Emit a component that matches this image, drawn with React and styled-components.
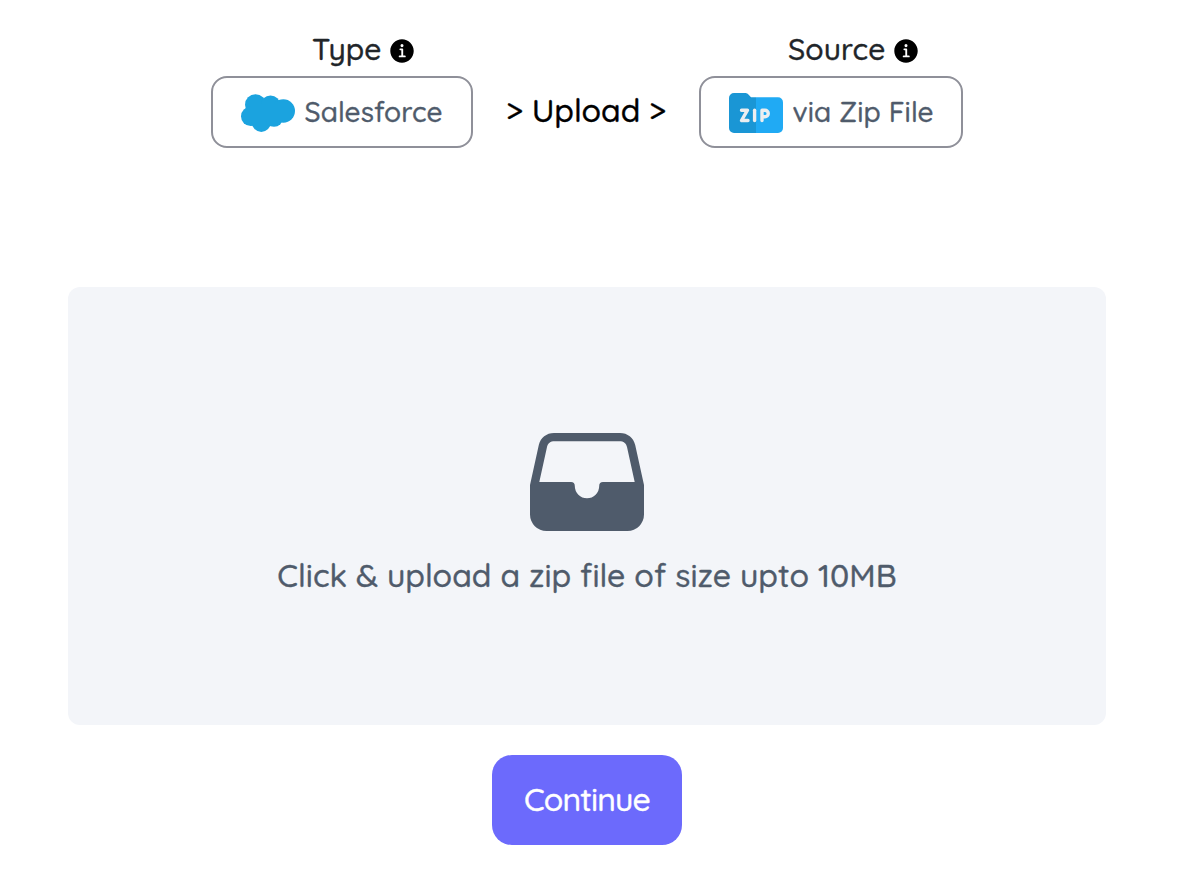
import styled, { createGlobalStyle } from "styled-components";
import { IoInformationCircle } from "react-icons/io5";

const App = () => {
  return (
    <>
      <GlobalStyle />
      <Container>
        <Header>
          <Option>
            <Label $indent="45px">
              Type <IoInformationCircle />
            </Label>
            <Select $width="262px">
              <SalesforceLogo />
              <Name>Salesforce</Name>
            </Select>
          </Option>
          <Step>&gt; Upload &gt;</Step>
          <Option>
            <Label $indent="47px">
              Source <IoInformationCircle />
            </Label>
            <Select $width="264px">
              <ZipLogo />
              <Name>via Zip File</Name>
            </Select>
          </Option>
        </Header>
        <DropZone>
          <InboxIcon />
          <Hint>Click &amp; upload a zip file of size upto 10MB</Hint>
        </DropZone>
        <Continue>Continue</Continue>
      </Container>
    </>
  );
};

const SalesforceLogo = () => (
  <svg width="54" height="38" viewBox="0 0 54 38">
    <g fill="#1ba3df">
      <circle cx="14.5" cy="10.7" r="10.5" />
      <circle cx="29.5" cy="11.3" r="9.8" />
      <circle cx="42.3" cy="17" r="11.7" />
      <circle cx="9.7" cy="22.3" r="9.7" />
      <circle cx="20.3" cy="28.3" r="9.6" />
      <circle cx="33" cy="23.8" r="9" />
      <path d="M10 10h32v16H10z" />
    </g>
  </svg>
);

const ZipLogo = () => (
  <svg width="54" height="40" viewBox="0 0 54 40">
    <path
      d="M5 0h11.500q2 0 3.200 1.700L22 4.300H27V40H5a5 5 0 0 1-5-5V5a5 5 0 0 1 5-5z"
      fill="#1a96d5"
    />
    <path d="M27 4.300h22a5 5 0 0 1 5 5V35a5 5 0 0 1-5 5H27z" fill="#20aaf4" />
    <g
      fill="none"
      stroke="#eceef0"
      strokeWidth="3.400"
      strokeLinecap="round"
      strokeLinejoin="round"
    >
      <path d="M12.500 17.200h6l-6 10.300h6.500" />
      <path d="M25.600 17.200v10.300" />
      <path d="M33 27.500V17.200h3a3 3 0 0 1 0 6.500h-3" />
    </g>
  </svg>
);

const InboxIcon = () => (
  <svg width="114" height="98" viewBox="0 0 114 98">
    <path
      fill="#4f5b6b"
      fillRule="evenodd"
      d="M24 0H90C97.500 0 103.500 4.800 105.200 12L114 52V81.500A16.500 16.500 0 0 1 97.500 98H16.500A16.500 16.500 0 0 1 0 81.500V52L8.800 12C10.500 4.800 16.500 0 24 0ZM24.500 8.300C20.500 8.300 17.800 10.300 17 14L9.300 49H41C43.500 49 44.800 50.600 44.800 53A12.200 12.200 0 0 0 69.200 53C69.200 50.600 70.500 49 73 49H104.700L97 14C96.200 10.300 93.500 8.300 89.500 8.300Z"
    />
  </svg>
);

const GlobalStyle = createGlobalStyle`
  body {
    margin: 0;
    background: #fff;
    font-family: Quicksand, Lato, sans-serif;
    font-weight: 500;
    -webkit-text-stroke: 0.35px;
  }
`;
const Container = styled.main`
  display: flex;
  flex-direction: column;
  align-items: center;
  height: 888px;
  padding: 30px 74px 0 68px;
  box-sizing: border-box;
`;
const Header = styled.header`
  display: flex;
  justify-content: center;
  align-items: flex-end;
  height: 118px;
  margin-bottom: 139px;
`;
const Option = styled.div`
  display: flex;
  flex-direction: column;
`;
const Label = styled.div`
  display: flex;
  align-items: center;
  justify-content: center;
  gap: 5.5px;
  height: 38px;
  margin-bottom: 8px;
  padding-left: ${(props) => props.$indent};
  color: #212529;
  font-size: 30px;
  letter-spacing: 0.1px;

  svg {
    width: 30px;
    height: 30px;
    margin-top: 4px;
    color: #000;
  }
`;
const Select = styled.button`
  display: flex;
  align-items: center;
  gap: 9.5px;
  width: ${(props) => props.$width};
  height: 72px;
  padding: 0 28px;
  box-sizing: border-box;
  border: 2px solid #8f9099;
  border-radius: 16px;
  background: #fff;
  font-family: inherit;
  font-weight: inherit;

  svg {
    flex-shrink: 0;
    margin-top: 2px;
  }
`;
const Name = styled.span`
  color: #4f5b6b;
  font-size: 28px;
  line-height: 34px;
  letter-spacing: 0.1px;
  white-space: nowrap;
`;
const Step = styled.div`
  width: 226px;
  height: 72px;
  color: #000;
  font-size: 32px;
  line-height: 69px;
  text-align: center;
  white-space: nowrap;
`;
const DropZone = styled.section`
  display: flex;
  flex-direction: column;
  align-items: center;
  width: 100%;
  height: 438px;
  padding-top: 146px;
  box-sizing: border-box;
  border-radius: 12px;
  background: #f3f5f9;
`;
const Hint = styled.p`
  margin: 24px 0 0;
  color: #4f5b6b;
  font-size: 32px;
  line-height: 40px;
  letter-spacing: 0.05px;
  white-space: nowrap;
`;
const Continue = styled.button`
  width: 190px;
  height: 90px;
  margin-top: 30px;
  padding: 0 0 2px;
  border: none;
  border-radius: 20px;
  background: #6c6afc;
  color: #fff;
  font-family: inherit;
  font-size: 32px;
  font-weight: inherit;
  letter-spacing: -0.9px;
`;

export default App;
